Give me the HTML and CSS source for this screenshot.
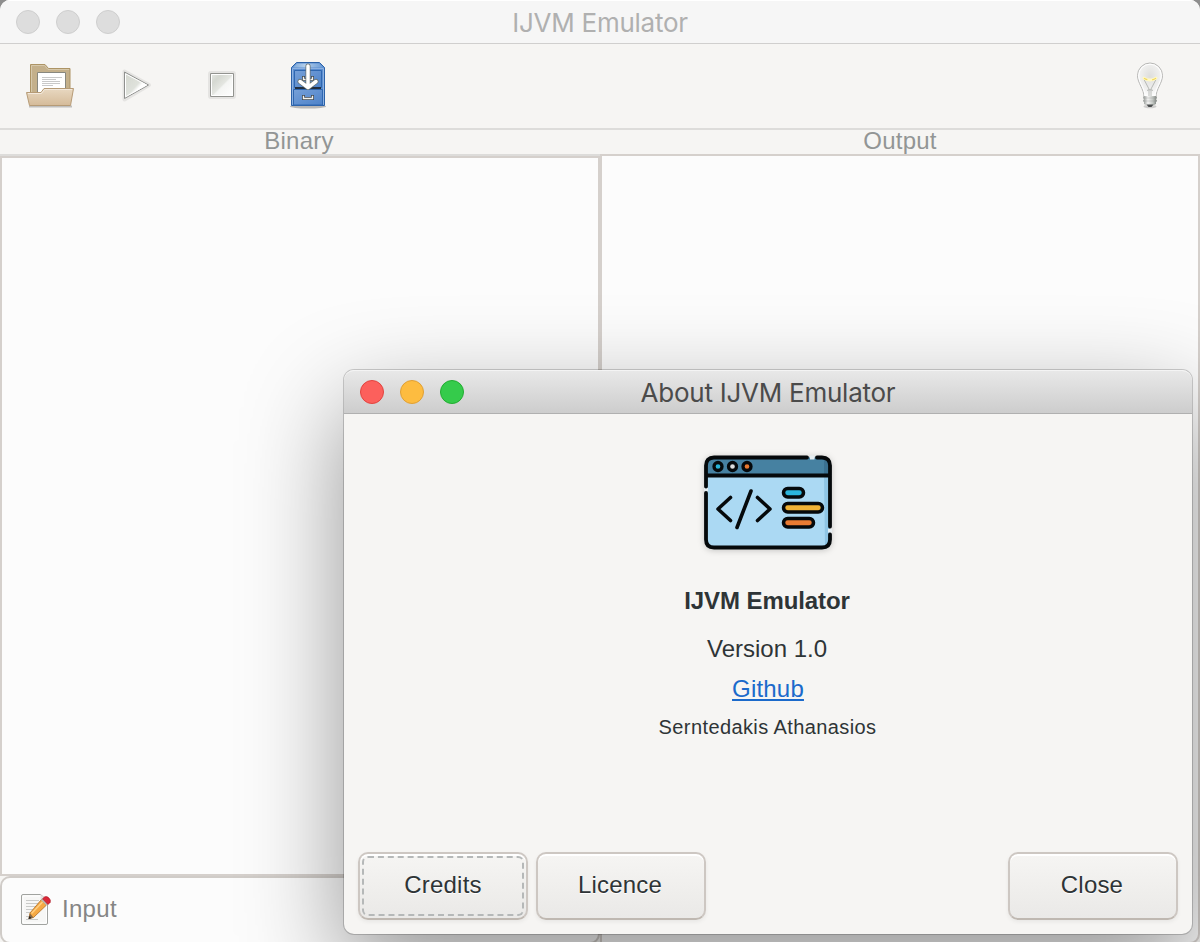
FILE: index.html
```html
<!DOCTYPE html>
<html lang="en">
<head>
<meta charset="utf-8">
<title>IJVM Emulator</title>
<link rel="stylesheet" href="styles.css">
</head>
<body>
<div class="window">
  <header class="titlebar">
    <div class="lights"><i></i><i></i><i></i></div>
    <h1 class="title">IJVM Emulator</h1>
  </header>
  <nav class="toolbar">
    <svg class="tool open" viewBox="0 0 50 48" width="50" height="48">
      <defs>
        <linearGradient id="fold" x2="0" y2="1"><stop stop-color="#e8d8c1"/><stop offset="1" stop-color="#d5bb99"/></linearGradient>
      </defs>
      <path d="M3 45.500h43" stroke="#000" stroke-opacity=".22" stroke-width="2"/>
      <path d="M4.500 42V3.500H19l3.500 4H44V42z" fill="#c4b08b" stroke="#ad9465"/>
      <path d="M5.500 40V4.500h13l3.500 4h21" fill="none" stroke="#d6c8ab"/>
      <path d="M11.500 11.500h28V36h-28z" fill="#fff" stroke="#88887f"/>
      <path d="M16 16.500h20M16 18.500h14M16 20.500h18M16 22.500h18M16 24.500h11" stroke="#c9c9c9"/>
      <path d="M.5 31.500H15l3-4h29.500l-3 17H3.500z" fill="url(#fold)" stroke="#b69b76"/>
      <path d="M2 32.500h13.500l3-4H46" fill="none" stroke="#f3e9dc"/>
    </svg>
    <svg class="tool play" viewBox="0 0 32 34" width="32" height="34">
      <defs>
        <linearGradient id="pl" x2="1" y2="1"><stop stop-color="#d3d6ce"/><stop offset=".5" stop-color="#dfe2dc"/><stop offset=".6" stop-color="#fff"/></linearGradient>
      </defs>
      <path d="M3.500 3.500v28L28 17z" fill="none" stroke="#e5e4e2" stroke-width="4" stroke-linejoin="round"/>
      <path d="M3.500 4v26.500L27.500 17z" fill="url(#pl)" stroke="#8f908e"/>
      <path d="M4.500 5.800v23L25.500 17z" fill="none" stroke="#fff"/>
    </svg>
    <svg class="tool stop" viewBox="0 0 28 28" width="28" height="28">
      <defs>
        <linearGradient id="st" x2="1" y2="1"><stop stop-color="#e8eae6"/><stop offset=".25" stop-color="#d5d8d1"/><stop offset=".5" stop-color="#e4e6e1"/><stop offset=".55" stop-color="#f4f5f3"/><stop offset="1" stop-color="#fff"/></linearGradient>
      </defs>
      <rect x="1" y="1" width="26" height="26" rx="2" fill="none" stroke="#e5e4e2" stroke-width="2"/>
      <path d="M2.500 2.500h23v23h-23z" fill="url(#st)" stroke="#92938f"/>
      <path d="M3.500 3.500h21v21h-21z" fill="none" stroke="#fff"/>
    </svg>
    <svg class="tool save" viewBox="0 0 38 50" width="38" height="50">
      <defs>
        <linearGradient id="cabtop" x2="1" y2="0"><stop stop-color="#7ea8d8"/><stop offset=".4" stop-color="#b4cfec"/><stop offset="1" stop-color="#6b9bd4"/></linearGradient>
        <linearGradient id="drawer" x2="1" y2="1"><stop stop-color="#76a0d8"/><stop offset="1" stop-color="#4d82c9"/></linearGradient>
      </defs>
      <ellipse cx="19" cy="46.500" rx="18" ry="2" fill="#000" opacity=".25"/>
      <path d="M2.500 7.500l5-5h23l5 5v38h-33z" fill="#5c8fd1" stroke="#2c62a8"/>
      <path d="M4 7.500l4-4h22l4 4z" fill="url(#cabtop)"/>
      <path d="M3.500 8.500h31v36h-31z" fill="none" stroke="#8db1e1"/>
      <path d="M5.500 10.500h27v17h-27z" fill="url(#drawer)" stroke="#2f67b0"/>
      <path d="M6 28h26" stroke="#222f40" stroke-width="2"/>
      <path d="M4.500 29.500h29v15.500h-29z" fill="url(#drawer)" stroke="#2f67b0"/>
      <path d="M14.500 17.500v2h9v-2M14.500 36.500v2h9v-2" fill="none" stroke="#40484f" stroke-width="3" stroke-linecap="square"/>
      <path d="M14.500 17.500v2h9v-2M14.500 36.500v2h9v-2" fill="none" stroke="#f2f2ee" stroke-width="1.400" stroke-linecap="square"/>
      <path d="M19 6v20M11 21.500l8 6 8-6" fill="none" stroke="#68716f" stroke-width="5" stroke-linecap="round" stroke-linejoin="round"/>
      <path d="M19 6v20M11 21.500l8 6 8-6" fill="none" stroke="#fff" stroke-width="3.500" stroke-linecap="round" stroke-linejoin="round"/>
    </svg>
    <svg class="tool bulb" viewBox="0 0 28 48" width="28" height="48">
      <defs>
        <radialGradient id="glass" cx=".5" cy=".4" r=".6"><stop stop-color="#dededc"/><stop offset=".65" stop-color="#f0f0ef"/><stop offset="1" stop-color="#fff"/></radialGradient>
        <linearGradient id="cap" x2="1" y2="0"><stop stop-color="#8d928e"/><stop offset=".35" stop-color="#f3f3f2"/><stop offset=".7" stop-color="#c3c7c3"/><stop offset="1" stop-color="#777d78"/></linearGradient>
      </defs>
      <ellipse cx="14" cy="45.500" rx="6.500" ry="1.800" fill="#000" opacity=".16"/>
      <path d="M8 36c0-8-6.500-14-6.500-21.500a12.500 12.500 0 0 1 25 0C26.500 22 20 28 20 36z" fill="url(#glass)" stroke="#b7b7b5"/>
      <path d="M9 35.500c0-8-6.300-14-6.300-21a11.300 11.300 0 0 1 22.600 0c0 7-6.300 13-6.300 21" fill="none" stroke="#fff"/>
      <path d="M8 18.500L13 28v8M20 18.500L15 28v8M11 29.500c1.500-1 4.500-1 6 0" fill="none" stroke="#a9aca8" stroke-width=".8"/>
      <path d="M8 17.200q6 3.600 12 0" fill="none" stroke="#fff8c4" stroke-width="3" stroke-linecap="round"/>
      <path d="M8 17.200q6 3.600 12 0" fill="none" stroke="#f0d861" stroke-width="1.300" stroke-dasharray="3.500 5 5"/>
      <path d="M8 35h12l1 2-1 1 1 2-1 1v2l-3 1.500h-6L8 43v-2l-1-1 1-2-1-1z" fill="url(#cap)"/>
      <path d="M7.500 37h13M7.500 40h13" stroke="#8a8f8b" stroke-opacity=".3"/>
      <path d="M10.500 43.500h7l-2 2.500h-3z" fill="#4a4d4d"/>
    </svg>
  </nav>
  <main class="panes">
    <section class="column binary">
      <h2 class="caption">Binary</h2>
      <div class="view"></div>
      <div class="entry">
        <svg viewBox="0 0 32 34" width="32" height="34">
          <path d="M4 2.500h17.500l7 6V31q0 1.500-1.500 1.500H4q-1.500 0-1.500-1.500V4q0-1.500 1.500-1.500z" fill="#f7f7f6" stroke="#a1a3a0"/>
          <path d="M4 4h17l6.500 5.500V31H4z" fill="none" stroke="#fff"/>
          <path d="M7 8.500h13M7 11.500h14M7 14.500h11M7 17.500h8M7 20.500h5M7 24.500h4M7 27.500h12" stroke="#c9cac8"/>
          <path d="M21.500 2.500v6h7" fill="#e4e4e2"/>
          <path d="M22.500 7.500l5 5.500-13 12.500-4.500 1 1-5.500z" fill="#f5a944" stroke="#b9762b" stroke-width=".9"/>
          <path d="M23.500 10L12.500 21.500" stroke="#ffcf82" stroke-width="1.500"/>
          <path d="M11 21.500l3.500 4-5 1.500z" fill="#85694a"/>
          <path d="M9.500 27l.8-3 2.200 2.300z" fill="#222"/>
          <path d="M22 8l2-2 5.500 5.500-2 2z" fill="#b9bdb9"/>
          <path d="M23.500 6.800l2.300-2q2.200-.7 4.200 1.300t1.200 4.200L29 12.500z" fill="#dc2737" stroke="#ab1b27" stroke-width=".7"/>
        </svg>
        <span>Input</span>
      </div>
    </section>
    <section class="column output">
      <h2 class="caption">Output</h2>
      <div class="view"></div>
    </section>
  </main>
</div>

<div class="dialog">
  <header class="dialog-bar">
    <div class="lights live"><i class="red"></i><i class="amber"></i><i class="green"></i></div>
    <h2 class="title">About IJVM Emulator</h2>
  </header>
  <div class="about">
    <svg class="logo" viewBox="0 0.500 130 96" width="130" height="96">
      <path d="M10 3h110q7 0 7 7v76q0 7-7 7H10q-7 0-7-7V10q0-7 7-7z" fill="#abd9f3"/>
      <path d="M10 3h110q7 0 7 7v11H3V10q0-7 7-7z" fill="#4681a1"/>
      <path d="M121 22h6v64q0 4-5 6z" fill="#8fc5e4"/>
      <path d="M121 4q6 0 6 6v11h-6z" fill="#3b7191"/>
      <path d="M107 3h4.500M3 33.500v3.500M127 74.500v3.500" stroke="#e6eef2" stroke-width="4"/>
      <path d="M104 3H11q-8 0-8 8v21M3 38.500v46.500q0 8 8 8h108q8 0 8-8V80M127 72V11q0-8-8-8h-5M3 21h124" fill="none" stroke="#05090b" stroke-width="3.800" stroke-linecap="round"/>
      <g stroke="#05090b" stroke-width="3.300"><circle cx="15" cy="12" r="4" fill="#28b3d6"/><circle cx="29.500" cy="12" r="4" fill="#ddd"/><circle cx="44" cy="12" r="4" fill="#e8772e"/></g>
      <path d="M27.500 43L15 54.500 27.500 66M48 36.500L34 73M54.500 43L67 54.500 54.500 66" fill="none" stroke="#05090b" stroke-width="3.600" stroke-linecap="round" stroke-linejoin="round"/>
      <g stroke="#05090b" stroke-width="3.500">
        <rect x="80.500" y="34" width="20" height="8.500" rx="4.200" fill="#2bb5dc"/>
        <rect x="80.500" y="49" width="39" height="8.500" rx="4.200" fill="#efb236"/>
        <rect x="80.500" y="64" width="30" height="8.500" rx="4.200" fill="#e97b32"/>
      </g>
    </svg>
    <strong class="name">IJVM Emulator</strong>
    <p class="version">Version 1.0</p>
    <a class="link">Github</a>
    <p class="author">Serntedakis Athanasios</p>
  </div>
  <footer class="actions">
    <button class="btn focused">Credits</button>
    <button class="btn">Licence</button>
    <button class="btn close">Close</button>
  </footer>
</div>
</body>
</html>
```
FILE: styles.css
```css
* { box-sizing: border-box; }

html { background: #8e8e8e; }

body {
  margin: 0;
  width: 1200px;
  height: 942px;
  overflow: hidden;
  position: relative;
  font: 24px/28px "Liberation Sans", Arial, sans-serif;
}

h1, h2, p { margin: 0; font-weight: normal; }

.window {
  height: 942px;
  display: flex;
  flex-direction: column;
  background: #f6f5f3;
  border-radius: 10px 10px 0 0;
  overflow: hidden;
}

.titlebar, .dialog-bar {
  display: grid;
  grid-template-columns: 120px 1fr 120px;
  align-items: center;
  height: 44px;
  flex: none;
  padding: 0 16px;
}

.titlebar {
  background: #f6f6f6;
  border-top: 1px solid #fff;
  border-bottom: 1px solid #d0cfce;
}

.lights { display: flex; gap: 16px; }

.lights i {
  width: 24px;
  height: 24px;
  border-radius: 50%;
  background: #dddddd;
  border: 1px solid #cecece;
}

.lights .red { background: #fc605c; border-color: #e2443f; }
.lights .amber { background: #fdbc40; border-color: #e0a035; }
.lights .green { background: #35cb4b; border-color: #22ad31; }

.title {
  font: 26px/30px Inter, Roboto, sans-serif;
  letter-spacing: -.25px;
  text-align: center;
  white-space: nowrap;
  padding-top: 2px;
  color: #b0b0b0;
}

.toolbar {
  height: 86px;
  flex: none;
  display: flex;
  align-items: center;
  padding: 0 36px 2px 26px;
  border-bottom: 2px solid #dddcda;
}

.tool { flex: none; }
.play { margin-left: 45px; }
.stop { margin-left: 55px; }
.save { margin-left: 53px; }
.bulb { margin-left: auto; }

.panes {
  flex: 1;
  display: grid;
  grid-template-columns: 600px 600px;
}

.column { display: flex; flex-direction: column; }

.caption {
  height: 24px;
  font-size: 24px;
  line-height: 21px;
  letter-spacing: .25px;
  text-align: center;
  color: #929595;
}

.view {
  flex: 1;
  background: #fcfcfc;
  border: 2px solid #d5d0cc;
}

.binary .caption { height: 26px; padding-right: 2px; border-bottom: 2px solid #dddcda; }
.output .view { margin-bottom: -2px; border-bottom-right-radius: 10px; }

.entry {
  height: 68px;
  margin-bottom: -2px;
  flex: none;
  display: flex;
  align-items: center;
  gap: 11px;
  padding: 0 0 3px 17px;
  background: #fcfcfc;
  border: 2px solid #d0ccc8;
  border-radius: 10px;
  color: #858585;
  letter-spacing: .3px;
}

.dialog {
  position: absolute;
  left: 344px;
  top: 370px;
  width: 848px;
  height: 564px;
  display: flex;
  flex-direction: column;
  background: #f6f5f3;
  border-radius: 10px;
  box-shadow: 0 0 0 1px rgba(0, 0, 0, .18), 0 36px 100px rgba(0, 0, 0, .42);
  color: #2e3436;
}

.dialog-bar {
  border-radius: 10px 10px 0 0;
  background: linear-gradient(#e8e8e8, #cdcdcd);
  border-top: 1px solid #f4f4f4;
  border-bottom: 1px solid #b0b0b0;
}

.dialog-bar .title { color: #4b4b4b; }

.about {
  flex: 1;
  display: flex;
  flex-direction: column;
  align-items: center;
  padding-top: 41px;
}

.logo { filter: drop-shadow(0 1px 3px rgba(0, 0, 0, .2)); }
.name { margin-top: 36px; padding-right: 2px; letter-spacing: -.1px; }
.version { margin-top: 20px; padding-right: 2px; }

.link {
  margin-top: 12px;
  color: #1b6acb;
  text-decoration: underline;
  text-decoration-thickness: 2px;
  text-underline-offset: 2px;
  letter-spacing: .2px;
}

.author { margin-top: 10px; padding-right: 1px; font-size: 20px; letter-spacing: .4px; }

.actions {
  display: flex;
  gap: 8px;
  padding: 0 14px 14px;
}

.btn {
  position: relative;
  width: 170px;
  height: 68px;
  padding: 0 2px 3px 0;
  font: 24px/28px "Liberation Sans", Arial, sans-serif;
  letter-spacing: .2px;
  color: #2e3436;
  background: linear-gradient(#f6f5f3, #eae9e7);
  border: 2px solid #cdc7c2;
  border-bottom-color: #bfb8b1;
  border-radius: 10px;
  box-shadow: inset 0 2px #fff, 0 2px 4px rgba(0, 0, 0, .06);
  text-shadow: 0 1px #fff;
}

.focused { padding-right: 0; }

.focused::after {
  content: "";
  position: absolute;
  inset: 2px;
  border: 2px dashed #b5b8b8;
  border-radius: 6px;
}

.close { margin-left: auto; }
```
